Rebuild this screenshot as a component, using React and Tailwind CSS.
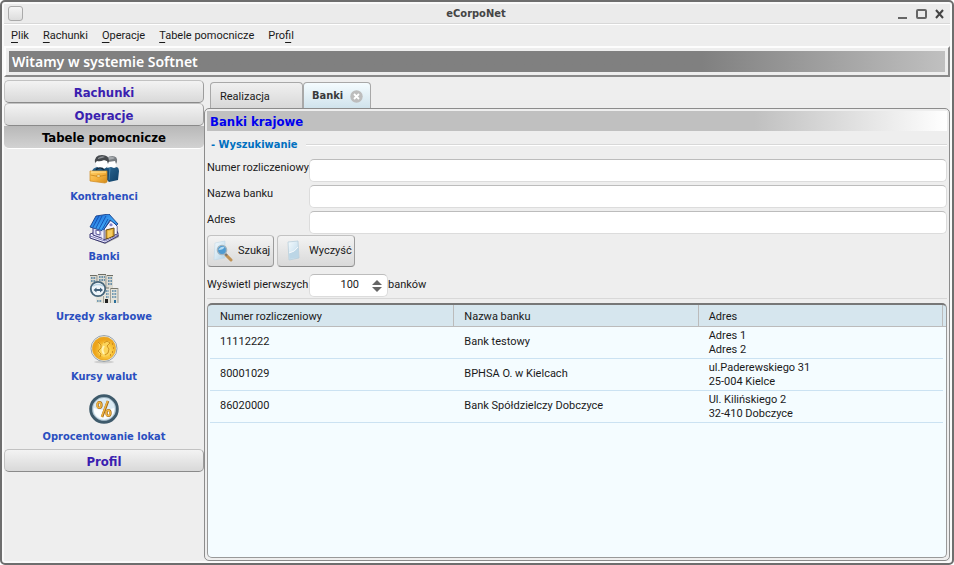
import React from "react";

const clients = (
  <svg viewBox="0 0 30 30" className="h-[30px] w-[30px]">
    <defs>
      <linearGradient id="kCase" x1="0" y1="0" x2="1" y2="1">
        <stop offset="0" stopColor="#ffd06a" /><stop offset=".5" stopColor="#f6b33e" /><stop offset="1" stopColor="#d08a1c" />
      </linearGradient>
      <linearGradient id="kSuit" x1="0" y1="0" x2="1" y2="1">
        <stop offset="0" stopColor="#2c6893" /><stop offset="1" stopColor="#0f3f66" />
      </linearGradient>
    </defs>
    <path d="M18 6h9v5q-1 4-4 4t-5-4z" fill="#ffffff" />
    <path d="M17 8q0-6 6-6 6 0 5 6l-1 2-1-3-7 1z" fill="#777c80" />
    <path d="M18 4q4-3 8 0l-2 1-5 1z" fill="#a5a9ac" />
    <path d="M18 14l4-1 3 1 3-1q2 1 2 4l-1 9-9 2-3-3z" fill="url(#kSuit)" />
    <path d="M3 17q1-3 5-4h9q3 1 3 4v9H4z" fill="url(#kSuit)" />
    <path d="M21 14l-1 12" stroke="#5291bb" strokeWidth=".7" />
    <path d="M7 7h12v3q-1 5-6 5t-6-5z" fill="#ffffff" />
    <path d="M6 9q-1-8 7-8 7 0 7 6l-1 3-1-3-3-1q-4 2-7 1z" fill="#45494d" />
    <path d="M9 4q4-3 7-1l-3 1-4 1z" fill="#8d9195" />
    <path d="M7 16q1-2 4-2t4 2" fill="none" stroke="#132b40" strokeWidth="1.500" />
    <path d="M1 17h17v11l-2 1-15-2z" fill="url(#kCase)" stroke="#d08a20" strokeWidth=".7" />
    <path d="M1.500 21q8 3 16 0" fill="none" stroke="#c8851c" strokeWidth=".8" />
    <path d="M2 18h15" fill="none" stroke="#ffe6a0" strokeWidth=".9" />
    <path d="M8 21h3v2H8z" fill="#fff1b8" stroke="#b87918" strokeWidth=".5" />
  </svg>
);

const house = (
  <svg viewBox="0 0 30 30" className="h-[30px] w-[30px]">
    <defs>
      <linearGradient id="hRoof" x1="0" y1="0" x2="1" y2="1">
        <stop offset="0" stopColor="#1664d8" /><stop offset=".6" stopColor="#3fa5f2" /><stop offset="1" stopColor="#1d72da" />
      </linearGradient>
    </defs>
    <path d="M3 25l13 5 14-7v-2l-14 5z" fill="#666" opacity=".6" />
    <path d="M1 20l3-1 23-3 2 3v3l-13 7L1 24z" fill="#eeeefc" stroke="#262268" strokeWidth=".9" />
    <path d="M1 22l15 5 13-6" fill="none" stroke="#5552a2" strokeWidth=".7" />
    <path d="M4 11l11 4v10L4 21z" fill="#dddcf6" stroke="#262268" strokeWidth=".9" />
    <path d="M15 15l7-9 6 6v8l-13 6z" fill="#f4f4ff" stroke="#262268" strokeWidth=".9" />
    <path d="M1 13L7 2l13-2 9 10-1.500 1-6.500-5-7 11z" fill="url(#hRoof)" stroke="#173f89" strokeWidth=".9" />
    <path d="M4 13L10 2M7 14l6-12M10 15l7-13M13 16l6-11" stroke="#124bb0" strokeWidth=".9" />
    <path d="M17 16l8-2v8l-8 3z" fill="#e9b53c" stroke="#6b4b13" />
    <path d="M19 17l4-1v6l-4 2z" fill="#f6cd62" />
    <path d="M7 16l4 1v4l-4-1z" fill="#fff" stroke="#4a4690" strokeWidth=".9" />
    <path d="M14 16v9M27 12v8" stroke="#fff" strokeWidth="1.200" />
    <path d="M20 11l2-2 2 2-2 1.500z" fill="#8381ca" />
  </svg>
);

const offices = (
  <svg viewBox="0 0 30 30" className="h-[30px] w-[30px]">
    <path d="M1 1h7v10H1zM9 0h8v14H9zM18 1h6v13h-6z" fill="#dcdbd2" />
    <path d="M1 1.500h7M9 .500h8M18 1.500h6" stroke="#6e6e65" strokeWidth="1.200" />
    <path d="M8 1v9M17 1v13" stroke="#8f8e84" />
    <path d="M2 4h5M2 7h5M10 3h6M10 6h6M19 4h4M19 7h4M19 10h4" stroke="#47799c" strokeWidth="1.700" strokeDasharray="1.600 .8" />
    <path d="M15 14h6v15h-6zM22 14h7v15h-7zM7 22h7v7H7z" fill="#e4e3da" />
    <path d="M15 14h5M22 14.500h7" stroke="#77776c" />
    <path d="M21.500 14v15M29 14v15M14.500 22v7" stroke="#8f8e84" strokeWidth=".8" />
    <path d="M17 17h3M23 17h5M17 20h3M23 20h5M17 23h3M23 23h5M8 27h5" stroke="#5285a8" strokeWidth="1.700" strokeDasharray="1.600 .8" />
    <path d="M16 25h3v4h-3z" fill="#222" />
    <path d="M25 26h2v3h-2z" fill="#2c6f9c" />
    <circle cx="9" cy="15" r="7.200" fill="#eef6fb" fillOpacity=".95" stroke="#466579" strokeWidth="1.800" />
    <path d="M4.500 16l3-2.500v1.600h3.500v-1.600l3 2.500-3 2.500v-1.600H7.500v1.600z" fill="#42617a" />
    <path d="M4 12q5-3 10 0" fill="none" stroke="#b9d6e7" strokeWidth="1.500" />
  </svg>
);

const coin = (
  <svg viewBox="0 0 30 30" className="h-[30px] w-[30px]">
    <defs>
      <radialGradient id="cGold" cx=".6" cy=".6">
        <stop offset="0" stopColor="#ffe98c" /><stop offset=".5" stopColor="#fac83e" /><stop offset="1" stopColor="#eda41b" />
      </radialGradient>
    </defs>
    <ellipse cx="15" cy="28" rx="10" ry="1.500" fill="#cfcfcf" />
    <circle cx="15" cy="14.500" r="13" fill="#f0f2f3" stroke="#98a3ab" strokeWidth="1" />
    <circle cx="15" cy="14.500" r="11.600" fill="url(#cGold)" stroke="#e0a323" strokeWidth=".6" />
    <path d="M9 8l4 3 2-3 5-1 1 3-3 3 3 4-1 4-5 2-4-2-2-3 2-3z" fill="#fbd45a" />
    <path d="M9 8l3 3v3l-3 3 3 3-1 3M15 9l3-2 3 2-3 3 2 3-1 4-3 2" fill="none" stroke="#c98918" strokeWidth=".9" />
    <path d="M15 12q-3 4 0 8" fill="none" stroke="#fff3b5" strokeWidth="2" />
    <path d="M23.500 9v2M24.500 13v2M23.500 17v2M21.500 20v2" stroke="#cf9024" />
  </svg>
);

const percent = (
  <svg viewBox="0 0 30 30" className="h-[30px] w-[30px]">
    <circle cx="15" cy="15" r="13.300" fill="#dcebf4" stroke="#3e5a6b" strokeWidth="3" />
    <circle cx="15" cy="15" r="11.600" fill="none" stroke="#8fa9b8" strokeWidth=".7" />
    <path d="M5 14q10 4 20 0v4q-3 7-10 7T5 18z" fill="#fbfdfe" />
    <g fill="none" stroke="#9c6618">
      <path d="M19 7l-6 16" strokeWidth="2.600" />
      <ellipse cx="10.500" cy="11" rx="2" ry="2.800" strokeWidth="2.300" />
      <ellipse cx="19.500" cy="19" rx="2" ry="2.800" strokeWidth="2.300" />
    </g>
    <g fill="none" stroke="#f0b440" strokeWidth="1.500">
      <path d="M18.600 7l-6 16" />
      <ellipse cx="10.200" cy="11" rx="2" ry="2.800" />
      <ellipse cx="19.200" cy="19" rx="2" ry="2.800" />
    </g>
  </svg>
);

const Page = ({ lens }) => (
  <svg viewBox="0 0 22 22" className="h-[22px] w-[22px] shrink-0">
    <defs>
      <linearGradient id="sheet" x1="0" y1="0" x2="1" y2="1">
        <stop offset="0" stopColor="#f4fafd" /><stop offset=".5" stopColor="#d6e8f3" /><stop offset="1" stopColor="#b4d1e3" />
      </linearGradient>
    </defs>
    {lens ? (
      <>
        <path d="M3 3l10-2v17l-11 2z" fill="url(#sheet)" stroke="#c3d8e5" strokeWidth=".6" />
        <path d="M14 15l5 5" stroke="#c19355" strokeWidth="3" strokeLinecap="round" />
        <path d="M12.500 13l2.500 2.500" stroke="#777" strokeWidth="2" />
        <circle cx="10" cy="10" r="4.600" fill="#4f9bd2" stroke="#a4b4bd" strokeWidth="1.400" />
        <path d="M6.500 10q2-4 6-3-1 3-6 3z" fill="#b4dbf3" />
      </>
    ) : (
      <>
        <path d="M6 2l10-1 1 17-10 2z" fill="url(#sheet)" stroke="#b9cedb" strokeWidth=".8" />
        <path d="M7 13q6-1 9-6l.500 10-9 2z" fill="#bcd6e6" />
        <path d="M7 13q6-1 9-6" fill="none" stroke="#fff" strokeWidth=".8" />
      </>
    )}
  </svg>
);

const sideItems = [
  ["Kontrahenci", clients],
  ["Banki", house],
  ["Urzędy skarbowe", offices],
  ["Kursy walut", coin],
  ["Oprocentowanie lokat", percent],
];

const menus = [
  ["", "P", "lik"],
  ["", "R", "achunki"],
  ["", "O", "peracje"],
  ["", "T", "abele pomocnicze"],
  ["Pro", "f", "il"],
];

const banks = [
  ["11112222", "Bank testowy", "Adres 1", "Adres 2"],
  ["80001029", "BPHSA O. w Kielcach", "ul.Paderewskiego 31", "25-004 Kielce"],
  ["86020000", "Bank Spółdzielczy Dobczyce", "Ul. Kilińskiego 2", "32-410 Dobczyce"],
];

const raised =
  "border border-[#c2c2c2] border-b-[#8a8a8a] border-r-[#9c9c9c] bg-linear-to-b from-[#f3f3f3] to-[#d9d9d9]";

const strong = "font-['DejaVu_Sans_Condensed','DejaVu_Sans',sans-serif] font-bold";

function SideButton({ children }) {
  return (
    <button className={`h-[23px] w-full rounded-[5px] pt-[2px] text-[13px] leading-4 text-[#3a1fb0] ${strong} ${raised}`}>
      {children}
    </button>
  );
}

function Field({ id, label }) {
  return (
    <div className="flex items-start">
      <label htmlFor={id} className="w-[102px] shrink-0 whitespace-nowrap leading-[18px]">{label}</label>
      <input id={id} className="h-[23px] min-w-0 flex-1 rounded-[5px] border border-[#dcdcdc] border-t-[#bcbcbc] bg-white px-2 outline-none" />
    </div>
  );
}

export default function App() {
  return (
    <div className="bg-white">
      <div className="flex min-h-screen flex-col rounded-[5px] border-2 border-[#6e6e6e] bg-[#fafafa] p-[2px] font-['Roboto','Liberation_Sans',sans-serif] text-[11px] text-[#1a1a1a]">
        <div className="flex flex-1 flex-col bg-[#eeeeee]">
          <header className="flex h-5 items-center border-b border-[#d8d8d8] bg-[#ebebeb] pl-1 pr-[6px]">
            <button aria-label="Menu okna" className="h-[15px] w-[15px] rounded-[3px] border border-[#aaaaaa] bg-linear-to-b from-[#f5f5f5] to-[#dddddd]" />
            <h1 className={`flex-1 pl-8 pt-[2px] text-center text-[11px] text-[#444444] ${strong}`}>eCorpoNet</h1>
            <div className="flex items-center gap-2">
              <button aria-label="Minimalizuj"><svg className="block h-3 w-[11px]" viewBox="0 0 11 12"><path d="M1 10h9" stroke="#666" strokeWidth="2" /></svg></button>
              <button aria-label="Maksymalizuj"><svg className="block h-3 w-[11px]" viewBox="0 0 11 12"><rect x="1" y="2" width="9" height="8" rx="1" fill="none" stroke="#666" strokeWidth="2" /></svg></button>
              <button aria-label="Zamknij"><svg className="block h-3 w-[9px]" viewBox="0 0 9 12"><path d="M1 2l7 8M8 2l-7 8" stroke="#444" strokeWidth="2" /></svg></button>
            </div>
          </header>
          <nav className="flex h-[22px] items-center gap-[14px] border-t border-white pl-[7px]">
            {menus.map(([a, b, c]) => (
              <button key={b} className="leading-4">{a}<u className="underline-offset-[3px]">{b}</u>{c}</button>
            ))}
          </nav>
          <div className="border-2 border-[#fdfdfd] border-b-[#8a8a8a] border-r-[#8a8a8a] p-[3px]">
            <div className="h-[21px] bg-linear-to-r from-[#808080] from-74% to-[#c0c0c0] pl-[3px] font-['Noto_Sans'] text-[14px] font-semibold leading-[21px] text-white">
              Witamy w systemie Softnet
            </div>
          </div>

          <div className="flex flex-1 pt-[3px]">
            <aside className="w-[200px] shrink-0">
              <SideButton>Rachunki</SideButton>
              <SideButton>Operacje</SideButton>
              <button className={`h-[23px] w-full rounded-b-[5px] border-b border-white bg-linear-to-b from-[#b8b8b8] to-[#d2d2d2] pt-[2px] text-[13px] leading-4 text-black ${strong}`}>
                Tabele pomocnicze
              </button>
              <ul>
                {sideItems.map(([name, icon]) => (
                  <li key={name} className="h-[60px] pt-[5px]">
                    <button className={`flex w-full flex-col items-center text-[#2a4fc0] ${strong}`}>
                      {icon}
                      <span className="pt-[5px] leading-4">{name}</span>
                    </button>
                  </li>
                ))}
              </ul>
              <SideButton>Profil</SideButton>
            </aside>

            <main className="flex min-w-0 flex-1 flex-col pt-[2px]">
              <div className="flex pl-[6px]">
                <button className="h-[26px] w-[93px] rounded-t-[4px] border border-b-0 border-[#a8a8a8] bg-linear-to-b from-[#f0f0f0] to-[#d8d8d8] pl-[9px] pt-[3px] text-left">
                  Realizacja
                </button>
                <div className="flex h-[26px] w-[68px] items-center gap-[7px] rounded-t-[4px] border border-b-0 border-[#a8a8a8] bg-linear-to-b from-[#f5fcff] to-[#d0e3ec] pl-2 pt-[2px] text-[#3a3a3a]">
                  <button className={strong}>Banki</button>
                  <button aria-label="Zamknij kartę">
                    <svg className="block h-[13px] w-[13px]" viewBox="0 0 13 13">
                      <circle cx="6.500" cy="6.500" r="6.200" fill="#bdbdbd" />
                      <path d="M4 4l5 5M9 4l-5 5" stroke="#fff" strokeWidth="1.800" />
                    </svg>
                  </button>
                </div>
              </div>

              <section className="flex flex-1 flex-col rounded-[5px] border border-[#8c8c8c] p-[2px]">
                <h2 className={`h-5 bg-linear-to-r from-[#c0c0c0] from-74% to-white pl-[3px] text-[13px] leading-[21px] text-[#0000ee] ${strong}`}>
                  Banki krajowe
                </h2>
                <div className="flex h-7 items-center gap-2 pl-1">
                  <h3 className={`pt-px text-[11px] text-[#0070c0] ${strong}`}>- Wyszukiwanie</h3>
                  <span className="h-[2px] flex-1 border-b border-t border-b-white border-t-[#d8d8d8]" />
                </div>
                <div className="flex flex-col gap-[3px] pb-px">
                  <Field id="number" label="Numer rozliczeniowy" />
                  <Field id="name" label="Nazwa banku" />
                  <Field id="address" label="Adres" />
                </div>
                <div className="flex gap-[3px]">
                  <button className={`flex h-8 w-[67px] items-center gap-1 rounded-[4px] pl-1 ${raised}`}>
                    <Page lens />Szukaj
                  </button>
                  <button className={`flex h-8 w-[78px] items-center gap-[5px] rounded-[4px] pl-1 ${raised}`}>
                    <Page />Wyczyść
                  </button>
                </div>
                <div className="flex items-center border-b border-[#d8d8d8] pb-px pt-[7px]">
                  <label htmlFor="limit" className="w-[102px] whitespace-nowrap">Wyświetl pierwszych</label>
                  <div className="flex h-[23px] w-[79px] items-center rounded-[5px] border border-[#dcdcdc] border-t-[#bcbcbc] bg-white">
                    <input id="limit" defaultValue="100" className="w-[49px] bg-transparent text-right outline-none" />
                    <div className="flex flex-1 flex-col items-center gap-[2px] pl-2">
                      <button aria-label="Więcej"><svg className="block h-[5px] w-[10px]" viewBox="0 0 10 5"><path d="M0 5L5 0l5 5z" fill="#666" /></svg></button>
                      <button aria-label="Mniej"><svg className="block h-[5px] w-[10px]" viewBox="0 0 10 5"><path d="M0 0l5 5 5-5z" fill="#666" /></svg></button>
                    </div>
                  </div>
                  <span>banków</span>
                </div>
                <div className="mt-1 flex-1 rounded-[5px] border border-[#999999] border-t-2 border-t-[#777777] bg-[linear-gradient(#d6e6ee_0_21px,#bbbbbb_21px_22px,#f4fcff_22px)] pl-[2px] pr-[3px]">
                  <table className="w-full table-fixed border-separate border-spacing-0">
                    <thead>
                      <tr>
                        {["Numer rozliczeniowy", "Nazwa banku", "Adres"].map((h) => (
                          <th key={h} className="h-[22px] border-r border-[#bbbbbb] p-0 pl-[10px] pt-[3px] text-left font-normal">{h}</th>
                        ))}
                      </tr>
                    </thead>
                    <tbody className="[&_td]:border-b [&_td]:border-[#cbe2f2] [&_td]:p-0 [&_td]:pl-[10px]">
                      {banks.map(([no, name, a1, a2]) => (
                        <tr key={no} className="h-8">
                          <td>{no}</td>
                          <td>{name}</td>
                          <td className="leading-[14px]">{a1}<br />{a2}</td>
                        </tr>
                      ))}
                    </tbody>
                  </table>
                </div>
              </section>
            </main>
          </div>
        </div>
      </div>
    </div>
  );
}
